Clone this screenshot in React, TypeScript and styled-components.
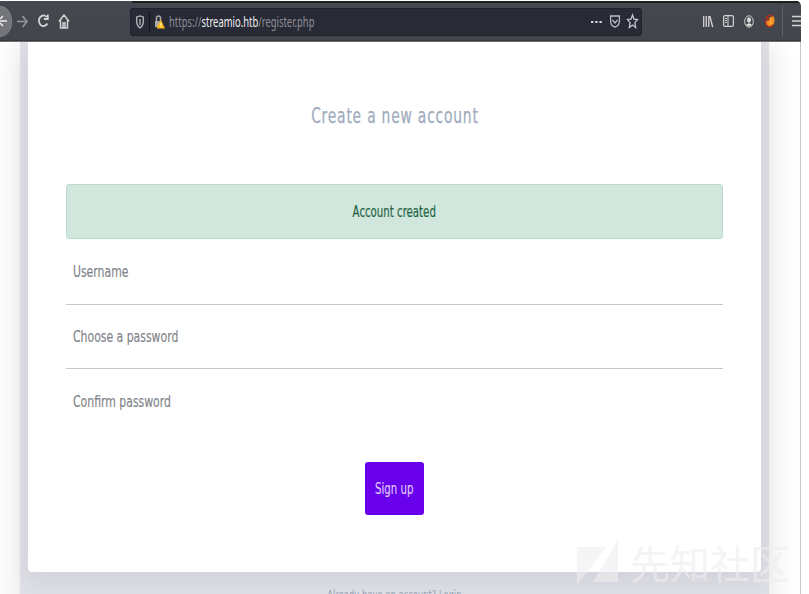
import React from "react";
import styled, { createGlobalStyle } from "styled-components";

const Global = createGlobalStyle`
  * { box-sizing: border-box; }
  body { margin: 0; background: #fff; overflow: hidden; }
`;

const Browser = styled.div`
  position: relative;
  width: 801px;
  height: 594px;
  padding-top: 1px;
  overflow: hidden;
  background: #fff;
  font-family: "DejaVu Sans", sans-serif;
`;

const Toolbar = styled.header`
  position: relative;
  display: flex;
  align-items: center;
  height: 41px;
  background: linear-gradient(#45484f, #42454b);
  border-bottom: 1px solid #6c6d71;
  box-shadow: inset 0 -1px #37383d;
  border-radius: 0 5px 0 0;
  overflow: hidden;
`;

const TabStrip = styled.div`
  position: absolute;
  left: 132px;
  right: 0;
  top: 0;
  height: 2px;
  background: #17231f;
`;

const NavGroup = styled.nav`
  display: flex;
  align-items: center;
  flex: none;
  width: 130px;
  height: 100%;
`;

const BackButton = styled.span`
  width: 12px;
  height: 31px;
  margin-right: 5px;
  background: #737477;
  border: 1px solid #818286;
  border-left: 0;
  border-radius: 0 12px 12px 0 / 0 15px 15px 0;
  display: flex;
  align-items: center;
`;

const Icon = styled.svg<{ $gap?: number }>`
  display: block;
  flex: none;
  margin-right: ${(p) => p.$gap ?? 0}px;
  fill: none;
  stroke: #d3d3d4;
  stroke-width: 1.5;
  overflow: visible;
`;

const AddressBar = styled.div`
  display: flex;
  align-items: center;
  flex: none;
  width: 512px;
  height: 28px;
  padding-left: 5px;
  margin-top: 1px;
  background: #282a36;
  border: 1px solid #20222b;
  border-radius: 3px;
`;

const Divider = styled.span<{ $tall?: boolean }>`
  flex: none;
  width: 1px;
  height: ${(p) => (p.$tall ? 32 : 20)}px;
  margin-right: ${(p) => (p.$tall ? 9 : 5)}px;
  background: ${(p) => (p.$tall ? "#606267" : "#15161d")};
`;

const Url = styled.span`
  flex: none;
  width: 422px;
  font: 14px/20px "Noto Sans", sans-serif;
  color: #8d8e95;
  white-space: nowrap;
  transform: scaleX(0.673);
  transform-origin: left;
  margin-top: 1px;
  b { font-weight: 400; color: #eeeef0; }
`;

const Tools = styled.div`
  display: flex;
  align-items: center;
  flex: 1;
  padding-left: 61px;
`;

const Page = styled.main`
  height: 552px;
  padding: 0 31px 0 20px;
  border-right: 1px solid #c6c6c8;
  overflow: hidden;
`;

const Backdrop = styled.section`
  height: 600px;
  padding: 0 8px;
  background: #dedfe5;
  box-shadow: 0 0 30px rgba(30, 30, 45, 0.12);
`;

const Card = styled.section`
  height: 530px;
  padding: 61px 38px 0;
  display: flex;
  flex-direction: column;
  align-items: center;
  background: #fff;
  border-radius: 0 0 4px 4px;
  box-shadow: 0 8px 22px rgba(30, 35, 45, 0.065);
`;

const Title = styled.h1`
  margin: 0 0 53px;
  height: 28px;
  font-weight: 400;
  font-size: 21px;
  line-height: 27px;
  letter-spacing: 1.2px;
  color: #a0abbd;
  -webkit-text-stroke: 0.25px currentColor;
  white-space: nowrap;
  transform: scaleX(0.66);
`;

const Alert = styled.div`
  width: 657px;
  height: 55px;
  display: flex;
  align-items: center;
  justify-content: center;
  background: #d1e7dd;
  border: 1px solid #badbcc;
  border-radius: 3px;
  color: #1f6544;
`;

const Label = styled.span<{ $field?: boolean }>`
  display: block;
  font-size: ${(p) => (p.$field ? 16.5 : 15)}px;
  line-height: 20px;
  white-space: nowrap;
  -webkit-text-stroke: 0.2px currentColor;
  transform: scaleX(${(p) => (p.$field ? 0.659 : 0.68)});
  transform-origin: ${(p) => (p.$field ? "left" : "center")};
`;

const Field = styled.label<{ $height: number; $last?: boolean }>`
  display: flex;
  align-items: center;
  width: 657px;
  height: ${(p) => p.$height}px;
  padding: 0 0 0 7px;
  color: #7f858b;
  border-bottom: ${(p) => (p.$last ? "0" : "1px solid #c5c5c7")};
`;

const Submit = styled.button`
  width: 59px;
  height: 53px;
  margin-top: 28px;
  padding: 0;
  display: flex;
  align-items: center;
  justify-content: center;
  border: 0;
  border-radius: 3px;
  background: #6800ec;
  color: #dec7fb;
  font-family: inherit;
`;

const LoginPrompt = styled.p`
  margin: 15px 0 0;
  font-size: 12px;
  line-height: 17px;
  text-align: center;
  color: #9aa7b9;
  transform: scaleX(0.7);
`;

const Watermark = styled.div`
  position: absolute;
  left: 577px;
  top: 538px;
  display: flex;
  align-items: center;
  height: 50px;
  color: #eeeef0;
  opacity: 0.6;
  font: 400 40px/50px "Noto Sans CJK SC", sans-serif;
  white-space: nowrap;
  span { margin-top: -2px; }
  svg { margin-right: 12px; fill: #efeff0; }
`;

export default function App() {
  return (
    <>
      <Global />
      <Browser>
        <Toolbar>
          <TabStrip />
          <NavGroup>
            <BackButton>
              <Icon width="8" height="12"><path d="M0 6H7M0 4L3 1M0 8L3 11" stroke="#eee" /></Icon>
            </BackButton>
            <Icon width="11" height="13" $gap={10}><path d="M0 6.5H10M5.5 1L10 6.5L5.5 12" stroke="#96989b" /></Icon>
            <Icon width="11" height="14" $gap={9}><path d="M8.6 3A4.5 5.3 0 1 0 9.3 9.5M5.8 5H9.8V0.5" strokeWidth="1.8" /></Icon>
            <Icon width="12" height="15"><path d="M1 7.5L6 1L11 7.5M2.5 6.5V14H9.5V6.5M5 14V9H7V14" /></Icon>
          </NavGroup>
          <AddressBar>
            <Icon width="8" height="14" $gap={5}><path d="M0.7 2L4 1L7.3 2V7Q7 11 4 13Q1 11 0.7 7ZM4 4V10" stroke="#b6b7bc" strokeWidth="1.3" /></Icon>
            <Divider />
            <Icon width="10" height="14" $gap={4}>
              <path d="M1.5 6V3Q1.5 1 3.5 1Q5.5 1 5.5 3V6" stroke="#aaa" />
              <path d="M0 6H6V12H0Z" fill="#aaa" stroke="none" />
              <path d="M5.8 4.5L10 13.5H1.6Z" fill="#ffbd13" stroke="none" />
              <path d="M5.9 8V10.5M5.9 11.2V12" stroke="#fff" strokeWidth="1" />
            </Icon>
            <Url>https://<b>streamio.htb</b>/register.php</Url>
            <Icon width="11" height="14" $gap={8}><path d="M0 7H2.4M4.2 7H6.6M8.4 7H10.8" strokeWidth="2.2" /></Icon>
            <Icon width="10" height="13" $gap={7}><path d="M.6 1H9.4V6Q9.4 11 5 12Q.6 11 .6 6ZM2.5 5L5 8L7.5 5" stroke="#bcbdc2" strokeWidth="1.3" /></Icon>
            <Icon width="11" height="15"><path d="M5.5 1L7 5.2L10.5 5.6L7.9 8.6L8.7 13.5L5.5 11L2.3 13.5L3.1 8.6L.5 5.6L4 5.2Z" stroke="#c6c7cb" strokeWidth="1.3" /></Icon>
          </AddressBar>
          <Tools>
            <Icon width="10" height="13" $gap={10}><path d="M.7 1V12M3.3 1V12M5.8 1V12M6.8 1L9.7 12" strokeWidth="1.3" /></Icon>
            <Icon width="11" height="12" $gap={10}><rect x=".6" y=".6" width="9.8" height="10.8" rx="1.5" strokeWidth="1.2" /><path d="M5 1V11M2 3.5H4M2 5.5H4M2 7.5H4" strokeWidth="1" /></Icon>
            <Icon width="10" height="13" $gap={11}><ellipse cx="5" cy="6.5" rx="4.3" ry="5.7" strokeWidth="1" /><ellipse cx="5" cy="5" rx="2" ry="2.7" fill="#ddd" stroke="none" /><path d="M2 10Q5 6.5 8 10Q5 12.5 2 10" fill="#ddd" stroke="none" /></Icon>
            <Icon width="10" height="14" $gap={7}><path d="M1 8L4 5L5 3L8.5 2L9.7 6L9 10L5 13L1 11Z" fill="#ee8a20" stroke="none" /><path d="M8 2.3Q4.5 0 1.8 3Q-.5 7 1.2 10.5Q4.5 15 8.3 11M1.8 3L5 8" stroke="#b92821" strokeWidth="1.2" /><path d="M4 7L7 4L6.5 8L8 9L5 11Z" fill="#ffac35" stroke="none" /></Icon>
            <Divider $tall />
            <Icon width="10" height="12"><path d="M0 1.5H10M0 6H10M0 10.5H10" /></Icon>
          </Tools>
        </Toolbar>
        <Page>
          <Backdrop>
            <Card>
              <Title>Create a new account</Title>
              <Alert><Label>Account created</Label></Alert>
              <Field $height={66}><Label $field>Username</Label></Field>
              <Field $height={64}><Label $field>Choose a password</Label></Field>
              <Field $height={65} $last><Label $field>Confirm password</Label></Field>
              <Submit><Label>Sign up</Label></Submit>
            </Card>
            <LoginPrompt>Already have an account? Login</LoginPrompt>
          </Backdrop>
        </Page>
        <Watermark>
          <svg width="41" height="46"><path d="M0 7H29L0 45ZM41 0V42H16Z" /></svg>
          <span>先知社区</span>
        </Watermark>
      </Browser>
    </>
  );
}
